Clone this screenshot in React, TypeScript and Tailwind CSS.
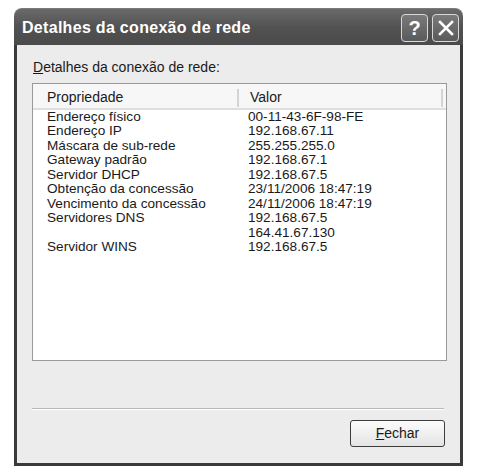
import React from "react";

const rows: [string, string][] = [
  ["Endereço físico", "00-11-43-6F-98-FE"],
  ["Endereço IP", "192.168.67.11"],
  ["Máscara de sub-rede", "255.255.255.0"],
  ["Gateway padrão", "192.168.67.1"],
  ["Servidor DHCP", "192.168.67.5"],
  ["Obtenção da concessão", "23/11/2006 18:47:19"],
  ["Vencimento da concessão", "24/11/2006 18:47:19"],
  ["Servidores DNS", "192.168.67.5"],
  ["", "164.41.67.130"],
  ["Servidor WINS", "192.168.67.5"],
];

export default function App() {
  return (
    <div
      className="w-[479px] h-[472px] bg-white pt-[8px] pl-[14px]"
      style={{ fontFamily: '"Liberation Sans", Arial, sans-serif' }}
    >
      <div className="w-[449px] h-[458px] flex flex-col">
        {/* Title bar */}
        <div className="h-[37px] rounded-t-[8px] bg-gradient-to-b from-[#6a6a6a] via-[#525252] to-[#4a4a4a] flex items-center pl-[8px] pr-[4px] border-t border-[#7a7a7a]">
          <span className="text-white font-bold text-[16px] tracking-[0.3px] flex-1 mt-[1px]">
            Detalhes da conexão de rede
          </span>
          <div className="flex gap-[4px] mt-[2px]">
            <div className="w-[27px] h-[28px] rounded-[4px] border-[1.5px] border-[#d8d8d8] bg-gradient-to-b from-[#7a7a7a] to-[#5a5a5a] flex items-center justify-center text-white font-bold text-[20px] leading-none">
              ?
            </div>
            <div className="w-[27px] h-[28px] rounded-[4px] border-[1.5px] border-[#d8d8d8] bg-gradient-to-b from-[#7a7a7a] to-[#5a5a5a] flex items-center justify-center">
              <svg width="16" height="16" viewBox="0 0 16 16">
                <path d="M2 2 L14 14 M14 2 L2 14" stroke="white" strokeWidth="2.6" strokeLinecap="square" />
              </svg>
            </div>
          </div>
        </div>
        {/* Body */}
        <div className="flex-1 bg-[#ececec] border-l-[3px] border-r-[3px] border-b-[3px] border-[#3a3a3a] pl-[15px] pr-[13px] pt-[14px] flex flex-col text-[14px] text-[#1a1a1a]">
          <div className="leading-[16px] mb-[8px] pl-[1px]">
            <span className="underline">D</span>etalhes da conexão de rede:
          </div>
          <div className="h-[278px] bg-white border border-[#9a9a9a] flex flex-col">
            <div className="h-[26px] shrink-0 flex items-center border-b-[2px] border-[#dedede] bg-[#f7f7f7] pt-[3px]">
              <div className="w-[206px] pl-[14px] border-r-[2px] border-[#d4d4d4] h-[18px] flex items-center">
                Propriedade
              </div>
              <div className="w-[204px] pl-[11px] border-r-[2px] border-[#d4d4d4] h-[18px] flex items-center">
                Valor
              </div>
            </div>
            <div className="text-[13.6px]">
              {rows.map(([k, v], i) => (
                <div key={i} className="flex h-[14.45px] leading-[14.45px]">
                  <div className="w-[208px] pl-[14px] whitespace-nowrap">{k}</div>
                  <div className="pl-[7px] whitespace-nowrap">{v}</div>
                </div>
              ))}
            </div>
          </div>
          <div className="mt-[47px] w-[412px] h-[2px] border-t border-[#b8b8b8] border-b border-b-white" />
          <div className="flex justify-end pr-[2px] mt-[10px]">
            <div className="w-[95px] h-[27px] rounded-[3px] border-[1.5px] border-[#3c3c3c] bg-gradient-to-b from-[#fcfcfc] to-[#e4e4e4] flex items-center justify-center">
              <span>
                <span className="underline">F</span>echar
              </span>
            </div>
          </div>
        </div>
      </div>
    </div>
  );
}
